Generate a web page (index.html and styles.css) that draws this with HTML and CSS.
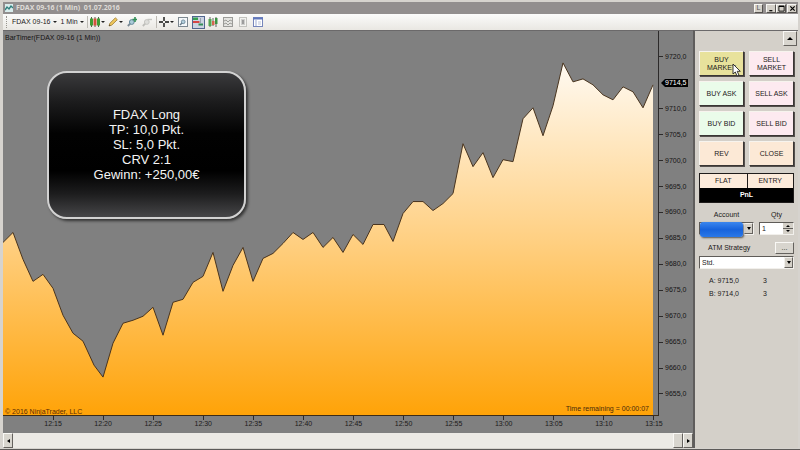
FILE: index.html
```html
<!DOCTYPE html>
<html lang="en">
<head>
  <meta charset="UTF-8">
  <meta name="viewport" content="width=device-width, initial-scale=1.0">
  <title>FDAX 09-16 (1 Min)</title>
  <link rel="stylesheet" href="styles.css">
</head>
<body>
  <div class="window">
    <header class="title-bar">
      <svg class="app-icon" viewBox="0 0 8 8">
        <rect width="8" height="8" fill="#d9ecec"/>
        <path d="M0 6 L2 3 L4 5 L6 2 L8 4" fill="none" stroke="#2f7f7c" stroke-width="1.4"/>
      </svg>
      <h1>FDAX 09-16 (1 Min)&nbsp; 01.07.2016</h1>
      <div class="window-buttons">
        <button class="win-btn link-btn">L</button>
        <button class="win-btn" aria-label="Minimize"><svg viewBox="0 0 8 8"><path d="M1.5 6.5H5" stroke="#000" stroke-width="1.4"/></svg></button>
        <button class="win-btn" aria-label="Maximize"><svg viewBox="0 0 8 8"><path d="M1 1.5H7V7H1Z" fill="none" stroke="#000"/><path d="M1 1.5H7" stroke="#000" stroke-width="1.6"/></svg></button>
        <button class="win-btn close-btn" aria-label="Close"><svg viewBox="0 0 8 8"><path d="M1.5 1.5L6.5 6.5M6.5 1.5L1.5 6.5" stroke="#000" stroke-width="1.4"/></svg></button>
      </div>
    </header>

    <nav class="toolbar">
      <span class="grip"></span>
      <button class="tool-text">FDAX 09-16<span class="caret"></span></button>
      <button class="tool-text">1 Min<span class="caret"></span></button>
      <span class="divider"></span>
      <button class="tool wide" aria-label="Chart style">
        <svg viewBox="0 0 10 10"><path d="M1.5 0V10M5 0V10M8.5 0V10" stroke="#2b3b22" stroke-width=".8"/><rect y="1.5" width="3" height="7" fill="#3f9d34"/><rect x="3.5" y="1.5" width="3" height="7" fill="#d4543c"/><rect x="7" y="1.5" width="3" height="7" fill="#3f9d34"/></svg>
        <span class="caret"></span>
      </button>
      <button class="tool wide" aria-label="Drawing tools">
        <svg viewBox="0 0 10 10"><path d="M1 9L2 6.2L7.4 .8L9.3 2.7L3.8 8.1Z" fill="#efc75c" stroke="#9b7a30" stroke-width=".8"/><path d="M1 9L1.5 7.5L2.5 8.5Z" fill="#473a2c"/></svg>
        <span class="caret"></span>
      </button>
      <button class="tool" aria-label="Zoom in">
        <svg viewBox="0 0 10 10"><path d="M.8 9L3.5 6.3" stroke="#798995" stroke-width="1.8"/><circle cx="4.8" cy="5" r="2.4" fill="#aacbd8" stroke="#678a9c"/><path d="M8 0V5M5.5 2.5H10" stroke="#328f57" stroke-width="1.6"/></svg>
      </button>
      <button class="tool" aria-label="Zoom out">
        <svg viewBox="0 0 10 10"><path d="M.8 9L3.5 6.3" stroke="#bdbdb9" stroke-width="1.8"/><circle cx="4.8" cy="5" r="2.4" fill="#dededb" stroke="#c6c6c2"/><path d="M5.5 2.5H10" stroke="#c6c6c2" stroke-width="1.4"/></svg>
      </button>
      <span class="divider"></span>
      <button class="tool wide" aria-label="Crosshair">
        <svg viewBox="0 0 10 10"><path d="M5 0V4M5 6V10M0 5H4M6 5H10" stroke="#111" stroke-width="1.4"/></svg>
        <span class="caret"></span>
      </button>
      <button class="tool" aria-label="Data box">
        <svg viewBox="0 0 10 10"><rect x=".5" y=".5" width="9" height="9" fill="#f5f8fa" stroke="#7d8890"/><path d="M2 8L4 6" stroke="#667987" stroke-width="1.4"/><circle cx="5.2" cy="4.8" r="1.9" fill="#b2cedb" stroke="#667f91" stroke-width=".8"/></svg>
      </button>
      <button class="tool active" aria-label="Chart trader">
        <svg viewBox="0 0 10 10"><rect y=".5" width="5" height="2.5" fill="#36a052"/><rect y="4" width="6.5" height="2" fill="#d64545"/><path d="M5.5 7.5H10" stroke="#328c57" stroke-width="2"/><path d="M7.5 1V6" stroke="#8995a2" stroke-width=".8"/></svg>
      </button>
      <button class="tool" aria-label="Data series">
        <svg viewBox="0 0 10 10"><path d="M2 0V10M5 1V9M8 0V10" stroke="#403c37" stroke-width=".8"/><rect x=".5" y="2" width="3" height="7" fill="#54a553"/><rect x="4" y="4" width="2.5" height="4" fill="#d4664f"/><rect x="7" y="1" width="2.5" height="6" fill="#3b9344"/></svg>
      </button>
      <button class="tool" aria-label="Indicators">
        <svg viewBox="0 0 10 10"><rect x=".5" y=".5" width="9" height="9" fill="#e4e4e1" stroke="#9b9b98"/><path d="M1 4L3 3L5 5L7 3L9 4M1 7L3 6L5 8L7 6L9 7" fill="none" stroke="#93938f" stroke-width=".9"/></svg>
      </button>
      <button class="tool" aria-label="Strategies">
        <svg viewBox="0 0 10 10"><rect x="1.5" y=".5" width="7" height="9" fill="#f2f2ef" stroke="#c2c2be"/><path d="M3 3H7M3 5H7M3 7H7" stroke="#aaa"/><path d="M5 3V7" stroke="#888" stroke-width="1.4"/></svg>
      </button>
      <button class="tool" aria-label="Properties">
        <svg viewBox="0 0 10 10"><rect x=".5" y=".5" width="9" height="9" fill="#fff" stroke="#7686bb"/><path d="M0 1.5H10" stroke="#6077bc" stroke-width="2"/><path d="M3 3V9" stroke="#9aa9d1"/><path d="M5 5H8M5 7H8" stroke="#a7b3ce" stroke-width=".8"/></svg>
      </button>
    </nav>

    <main class="workspace">
      <section class="chart">
        <div class="chart-body">
          <div class="plot">
            <svg class="area" viewBox="0 0 655 385" preserveAspectRatio="none">
              <defs>
                <linearGradient id="fill" gradientUnits="userSpaceOnUse" x1="0" y1="32" x2="0" y2="385">
                  <stop offset="0" stop-color="#fffaf2"/>
                  <stop offset=".5" stop-color="#ffd083"/>
                  <stop offset="1" stop-color="#ffa308"/>
                </linearGradient>
              </defs>
              <path class="area-fill" d="M0 385V212L10 202L20 229L30 251L40 244L50 258L60 285L70 303L80 311L91 335L100 347L110 313L120 293L130 290L140 286L150 277L160 305L170 272L180 269L190 252L200 246L210 222L220 261L230 235L240 217L250 251L260 228L270 223L280 213L290 202L300 209L310 202L320 217L330 207L340 222L350 204L360 214L370 194H381L390 211L400 183L410 171H420L430 180L440 173L450 163L460 113L470 136L480 122L490 147L500 129L510 131L520 88L530 77L540 105L550 75L560 32L570 51L580 48L590 54L600 64L610 69L620 56L630 61L640 77L650 54V385Z"/>
              <path class="area-line" d="M0 212L10 202L20 229L30 251L40 244L50 258L60 285L70 303L80 311L91 335L100 347L110 313L120 293L130 290L140 286L150 277L160 305L170 272L180 269L190 252L200 246L210 222L220 261L230 235L240 217L250 251L260 228L270 223L280 213L290 202L300 209L310 202L320 217L330 207L340 222L350 204L360 214L370 194H381L390 211L400 183L410 171H420L430 180L440 173L450 163L460 113L470 136L480 122L490 147L500 129L510 131L520 88L530 77L540 105L550 75L560 32L570 51L580 48L590 54L600 64L610 69L620 56L630 61L640 77L650 54"/>
            </svg>
            <p class="indicator-label">BarTimer(FDAX 09-16 (1 Min))</p>
            <p class="copyright">© 2016 NinjaTrader, LLC</p>
            <p class="remaining">Time remaining = 00:00:07</p>
            <div class="callout">
              <p>FDAX Long</p>
              <p>TP: 10,0 Pkt.</p>
              <p>SL: 5,0 Pkt.</p>
              <p>CRV 2:1</p>
              <p>Gewinn: +250,00€</p>
            </div>
          </div>
          <ol class="price-axis">
            <li>9720,0</li>
            <li class="last-price"><span>9714,5</span></li>
            <li>9710,0</li>
            <li>9705,0</li>
            <li>9700,0</li>
            <li>9695,0</li>
            <li>9690,0</li>
            <li>9685,0</li>
            <li>9680,0</li>
            <li>9675,0</li>
            <li>9670,0</li>
            <li>9665,0</li>
            <li>9660,0</li>
            <li>9655,0</li>
          </ol>
        </div>
        <ol class="time-axis">
          <li>12:15</li>
          <li>12:20</li>
          <li>12:25</li>
          <li>12:30</li>
          <li>12:35</li>
          <li>12:40</li>
          <li>12:45</li>
          <li>12:50</li>
          <li>12:55</li>
          <li>13:00</li>
          <li>13:05</li>
          <li>13:10</li>
          <li>13:15</li>
        </ol>
        <div class="scrollbar">
          <button class="scroll-btn" aria-label="Scroll left"><span class="arrow-left"></span></button>
          <span class="track"></span>
          <span class="thumb"></span>
          <button class="scroll-btn" aria-label="Scroll right"><span class="arrow-right"></span></button>
        </div>
      </section>

      <aside class="trader">
        <button class="collapse" aria-label="Collapse"><span class="arrow-up"></span></button>

        <div class="orders">
          <button class="order hover">BUY<br>MARKET
            <svg class="cursor" viewBox="0 0 9 14"><path d="M1 1V11L3.3 9L5 13L7 12.2L5.2 8.3H8.3Z" fill="#fff" stroke="#222" stroke-width=".9"/></svg>
          </button>
          <button class="order sell">SELL<br>MARKET</button>
          <button class="order buy">BUY ASK</button>
          <button class="order sell">SELL ASK</button>
          <button class="order buy">BUY BID</button>
          <button class="order sell">SELL BID</button>
          <button class="order flat">REV</button>
          <button class="order flat">CLOSE</button>
        </div>

        <div class="position">
          <span>FLAT</span>
          <span>ENTRY</span>
          <strong>PnL</strong>
        </div>

        <form class="settings">
          <div class="row">
            <div class="field account">
              <label for="account">Account</label>
              <div class="select">
                <select id="account"><option></option></select>
                <span class="drop"></span>
                <span class="mask"></span>
              </div>
            </div>
            <div class="field qty">
              <label for="qty">Qty</label>
              <div class="spinner">
                <input id="qty" type="text" value="1">
                <span class="spin"><i class="spin-up"></i><i class="spin-down"></i></span>
              </div>
            </div>
          </div>
          <div class="row atm">
            <label for="atm">ATM Strategy</label>
            <button type="button" class="more">...</button>
          </div>
          <div class="select">
            <select id="atm"><option>Std.</option></select>
            <span class="drop"></span>
          </div>
        </form>

        <dl class="quotes">
          <dt>A: 9715,0</dt><dd>3</dd>
          <dt>B: 9714,0</dt><dd>3</dd>
        </dl>
      </aside>
    </main>
  </div>
</body>
</html>
```

FILE: styles.css
```css
* {
  box-sizing: border-box;
}

body {
  margin: 0;
  font-family: "Liberation Sans", Arial, sans-serif;
  font-size: 7px;
  line-height: 8px;
  color: #1c1a1a;
}

p, ol, dl, dd, h1 {
  margin: 0;
  padding: 0;
}

ol {
  list-style: none;
}

button, select, input {
  font: inherit;
  color: inherit;
  padding: 0;
  margin: 0;
  border-radius: 0;
}

.window {
  display: flex;
  flex-direction: column;
  height: 100vh;
  padding: 2px 2px 1px 3px;
  background-color: #d6d3ce;
  border-bottom: 1px solid #5c5a58;
}

/* Title bar */
.title-bar {
  display: flex;
  align-items: center;
  gap: 3px;
  height: 12px;
  padding: 0 1px 0 2px;
  background-color: #928e8e;
}

.app-icon {
  width: 8px;
  height: 8px;
}

.title-bar h1 {
  font-family: "Noto Sans", sans-serif;
  font-size: 7px;
  font-weight: bold;
  color: #dedbd6;
}

.window-buttons {
  display: flex;
  margin-left: auto;
}

.win-btn {
  display: flex;
  align-items: center;
  justify-content: center;
  width: 10px;
  height: 9px;
  background-color: #d4d0c8;
  border: 1px solid;
  border-color: #f8f7f4 #55524f #55524f #f8f7f4;
}

.win-btn svg {
  flex: none;
  width: 7px;
  height: 7px;
}

.link-btn {
  width: 9px;
  margin-right: 3px;
  color: #555;
}

.close-btn {
  margin-left: 1px;
}

/* Toolbar */
.toolbar {
  display: flex;
  align-items: center;
  height: 16px;
  gap: 2px;
  padding-left: 3px;
  background: linear-gradient(#fbfbfa, #e9e7e2);
}

.grip {
  height: 12px;
  border-left: 1px dotted #97948e;
  margin-right: 2px;
}

.tool-text, .tool {
  display: flex;
  align-items: center;
  gap: 2px;
  border: 1px solid transparent;
  background: none;
}

.tool {
  justify-content: center;
  gap: 1px;
  width: 13px;
  height: 13px;
}

.tool.wide {
  width: 16px;
}

.tool svg {
  flex: none;
  width: 10px;
  height: 10px;
}

.tool.active {
  background-color: #cbd3e2;
  border-color: #52668f;
}

.caret {
  border: 2px solid transparent;
  border-top-color: #222;
  border-bottom: 0;
}

.divider {
  height: 12px;
  border-left: 1px solid #bdbab4;
}

/* Chart */
.workspace {
  display: flex;
  flex: 1;
  min-height: 0;
}

.chart {
  display: flex;
  flex-direction: column;
  flex: 1;
  border-top: 1px solid #6b696a;
  background-color: #808080;
}

.chart-body {
  display: flex;
  flex: 1;
  min-height: 0;
  color: #161414;
}

.plot {
  position: relative;
  flex: 1;
  border-right: 1px solid #2c2a2a;
  border-bottom: 1px solid #3c2c18;
}

.area {
  position: absolute;
  width: 100%;
  height: 100%;
}

.area-fill {
  fill: url(#fill);
}

.area-line {
  fill: none;
  stroke: #49341e;
  vector-effect: non-scaling-stroke;
}

.indicator-label, .copyright, .remaining {
  position: absolute;
}

.indicator-label {
  top: 3px;
  left: 2px;
}

.copyright {
  bottom: -1px;
  left: 2px;
  color: #5c2c04;
}

.remaining {
  right: 9px;
  bottom: 2px;
  color: #4b2a08;
}

.callout {
  position: absolute;
  top: 40px;
  left: 44px;
  width: 199px;
  height: 148px;
  padding-top: 34px;
  border: 2px solid #d2d2d2;
  border-radius: 20px;
  background: linear-gradient(#3a3a3c, #1c1c1d 20%, #020202 42%, #000 68%, #1d1d1e 84%, #464648);
  box-shadow: 2px 2px 3px rgba(0, 0, 0, 0.6);
  color: #f4f4f4;
  font-size: 13px;
  line-height: 15px;
  text-align: center;
}

.price-axis {
  display: flex;
  flex-direction: column;
  width: 34px;
  padding: 13px 0 9px;
}

.price-axis li {
  display: flex;
  flex: 1;
  align-items: center;
  gap: 2px;
}

.price-axis li::before {
  content: "";
  width: 4px;
  border-top: 1px solid #2c2a2a;
}

.price-axis .last-price::before {
  display: none;
}

.last-price span {
  margin-left: 2px;
  padding: 0 2px 0 4px;
  background-color: #000;
  color: #fff;
  clip-path: polygon(0 50%, 4px 0, 100% 0, 100% 100%, 4px 100%);
}

.time-axis {
  display: flex;
  height: 17px;
  padding: 0 14px 0 25px;
  text-align: center;
}

.time-axis li {
  flex: 1;
}

.time-axis li::before {
  content: "";
  display: block;
  width: 1px;
  height: 4px;
  margin: 0 auto;
  background-color: #2c2a2a;
}

/* Scrollbar */
.scrollbar {
  display: flex;
  height: 15px;
  background-color: #eceae5;
}

.track {
  flex: 1;
}

.scroll-btn, .thumb, .collapse, .more {
  display: flex;
  align-items: center;
  justify-content: center;
  background-color: #d8d5ce;
  border: 1px solid;
  border-color: #f9f8f5 #65625e #65625e #f9f8f5;
}

.scroll-btn, .thumb {
  width: 10px;
}

.arrow-left, .arrow-right {
  border: 2px solid transparent;
}

.arrow-left {
  border-right: 3px solid #000;
  border-left: 0;
}

.arrow-right {
  border-left: 3px solid #000;
  border-right: 0;
}

/* Chart trader */
.trader {
  display: flex;
  flex-direction: column;
  width: 105px;
  padding: 0 4px;
  border-top: 1px solid #6b696a;
  border-left: 2px solid #5f5d5c;
  background-color: #d4d0c9;
}

.collapse {
  align-self: flex-end;
  width: 14px;
  height: 15px;
  margin-right: -3px;
}

.arrow-up {
  border: 3px solid transparent;
  border-bottom-color: #000;
  border-top: 0;
}

.orders {
  display: grid;
  grid-template-columns: 1fr 1fr;
  grid-auto-rows: 25px;
  gap: 5px;
  margin-top: 5px;
}

.order {
  position: relative;
  border: 1px solid;
  border-color: #f7f4ee #3a3634 #3a3634 #f7f4ee;
  box-shadow: 1px 1px 0 #55504d;
}

.buy {
  background-color: #eafcea;
}

.sell {
  background-color: #fdeaf0;
}

.flat {
  background-color: #fce9d6;
}

.hover {
  background-color: #e8e29c;
}

.cursor {
  position: absolute;
  top: 11px;
  left: 32px;
  width: 9px;
  height: 14px;
  z-index: 1;
}

.position {
  display: grid;
  grid-template-columns: 1fr 1fr;
  margin-top: 7px;
  border: 1px solid #1f1c1b;
  background-color: #fcebdb;
  text-align: center;
  line-height: 14px;
}

.position span + span {
  border-left: 1px solid #1f1c1b;
}

.position strong {
  grid-column: span 2;
  background-color: #000;
  color: #fff;
}

.settings {
  margin-top: 8px;
}

.row {
  display: flex;
  gap: 5px;
}

.field {
  min-width: 0;
}

.field label {
  display: block;
  height: 11px;
  text-align: center;
}

.account {
  flex: 11;
}

.qty {
  flex: 7;
}

.select, .spinner {
  position: relative;
  display: flex;
  height: 13px;
  border: 1px solid;
  border-color: #5f5c58 #f2f0ec #f2f0ec #5f5c58;
  background-color: #fff;
}

.select select, .spinner input {
  flex: 1;
  width: 100%;
  min-width: 0;
  padding-left: 2px;
  appearance: none;
  border: 0;
  background: none;
}

.drop {
  display: flex;
  flex: none;
  align-items: center;
  justify-content: center;
  width: 9px;
  background-color: #d4d0c8;
  border: 1px solid;
  border-color: #f2f0ec #65625e #65625e #f2f0ec;
}

.drop::before {
  content: "";
  border: 2px solid transparent;
  border-top: 3px solid #000;
  border-bottom: 0;
}

.mask {
  position: absolute;
  top: -1px;
  left: 0;
  width: 43px;
  height: 15px;
  border-radius: 3px;
  background: linear-gradient(#3b86ee, #1763dc 50%, #2a78e8);
  box-shadow: 1px 1px 2px rgba(0, 0, 0, 0.6);
}

.spin {
  display: flex;
  flex: none;
  flex-direction: column;
  align-items: center;
  justify-content: space-around;
  width: 10px;
  background: linear-gradient(#d4d0c8 5px, #65625e 5px, #65625e 6px, #d4d0c8 6px);
}

.spin-up, .spin-down {
  border: 2px solid transparent;
}

.spin-up {
  border-bottom-color: #000;
  border-top: 0;
}

.spin-down {
  border-top-color: #000;
  border-bottom: 0;
}

.atm {
  align-items: center;
  justify-content: space-between;
  margin: 7px 0 2px;
  padding-left: 9px;
}

.more {
  width: 19px;
  height: 12px;
}

.quotes {
  display: grid;
  grid-template-columns: 40px 1fr;
  gap: 5px 14px;
  margin-top: 8px;
  padding-left: 10px;
}
```
